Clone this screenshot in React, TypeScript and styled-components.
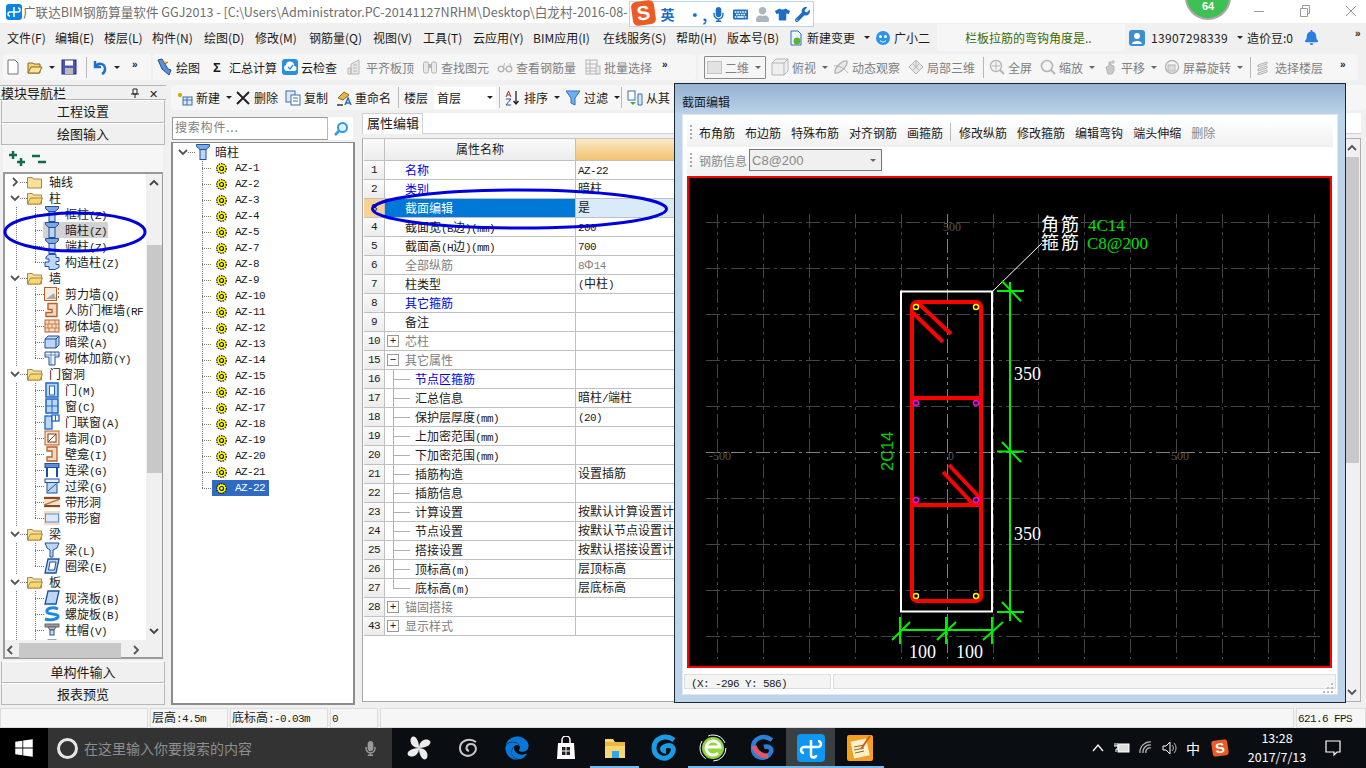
import React from "react";
import styled, { createGlobalStyle } from "styled-components";
import { FaMicrophone, FaKeyboard, FaTshirt, FaWrench, FaUser, FaWindows, FaEdge, FaBell } from "react-icons/fa";

const CJK = `"Noto Sans CJK SC", "Liberation Sans", sans-serif`;
const Global = createGlobalStyle`
  html, body { margin: 0; padding: 0; background: #f0f0f0; }
  body { font-family: ${CJK}; font-size: 12px; color: #1a1a1a; }
  * { box-sizing: border-box; }
`;

/* ---------- shell ---------- */
const Page = styled.div`position: relative; width: 1366px; height: 768px; overflow: hidden; display: flex; flex-direction: column; background: #f0f0f0;`;
const TitleBar = styled.div`flex: none; height: 23px; background: #fff; display: flex; align-items: center; padding-left: 6px; gap: 0; color: #6e6e6e; font-size: 12.6px; white-space: nowrap; overflow: hidden;`;
const AppLogo = styled.div`width: 16px; height: 16px; border-radius: 3px; background: #0a84e0; margin-right: 1px; flex: none; display: flex;`;
const WindowButtons = styled.div`position: absolute; top: 0; left: 1236px; display: flex; color: #888;`;
const WinBtn = styled.div`width: 46px; height: 22px; display: flex; align-items: center; justify-content: center;`;

const ImeBar = styled.div`position: absolute; left: 629px; top: 1px; width: 185px; height: 26px; background: #fff; border: 1px solid #bcd4e6; display: flex; align-items: center; color: #1c6fc4; z-index: 3;`;
const ImeLogo = styled.div`width: 24px; height: 24px; margin: -2px 6px 0 2px; background: #ee5a24; color: #fff; border-radius: 5px; transform: rotate(-8deg); font: 700 20px/24px "Liberation Sans", sans-serif; text-align: center;`;
const ImeWord = styled.span`font-weight: 700; font-size: 14px; width: 28px;`;
const ImeSlot = styled.div<{ $w: number }>`width: ${(p) => p.$w}px; display: flex; justify-content: center; align-items: center; font-size: 15px;`;

const ScoreBadge = styled.div`position: absolute; left: 1185px; top: -26px; width: 46px; height: 46px; border-radius: 50%; background: #3fc052; border: 2px solid #a9a9a9; color: #fff; font: 700 11px "Liberation Sans", sans-serif; display: flex; align-items: flex-end; justify-content: center; padding-bottom: 6px; z-index: 3;`;

/* ---------- menu ---------- */
const MenuBar = styled.div`flex: none; height: 29px; display: flex; align-items: center; padding-left: 7px; white-space: nowrap;`;
const MenuItem = styled.div<{ $w: number }>`flex: none; width: ${(p) => p.$w}px; display: flex; align-items: center; gap: 3px; font-size: 12px;`;
const TipPanel = styled.div`flex: none; width: 188px; height: 27px; margin: 0 4px; padding-left: 28px; background: #f6f6f6; border-radius: 3px; color: #3a6a00; line-height: 27px;`;
const Phone = styled.span`margin-left: 3px; letter-spacing: 0.35px;`;
const Chevrons = styled.div<{ $ml?: number }>`flex: none; margin-left: ${(p) => p.$ml ?? 0}px; font: 700 10px "Liberation Sans", sans-serif; letter-spacing: -1px; align-self: flex-start; padding-top: 5px; color: #222;`;
const Caret = styled.span<{ $dim?: boolean; $gap?: number }>`flex: none; width: 0; height: 0; border: 3px solid transparent; border-top: 3px solid ${(p) => (p.$dim ? "#666" : "#222")}; border-bottom: 0; margin-left: ${(p) => p.$gap ?? 3}px;`;

/* ---------- toolbars ---------- */
const MainBar = styled.div`flex: none; height: 30px; display: flex; align-items: center; padding-left: 3px; white-space: nowrap; overflow: hidden;`;
const BarGroup = styled.div<{ $w: number; $pad?: number }>`flex: none; width: ${(p) => p.$w}px; height: 26px; display: flex; align-items: center; background: #f6f6f6; border-radius: 3px; margin-right: 2px; padding-left: ${(p) => p.$pad ?? 0}px;`;
const Tool = styled.div<{ $w: number; $dim?: boolean }>`flex: none; width: ${(p) => p.$w}px; display: flex; align-items: center; gap: 3px; padding-left: 2px; font-size: 12px; color: ${(p) => (p.$dim ? "#808080" : "#1a1a1a")};`;
const Sep = styled.div`flex: none; width: 1px; height: 21px; background: #b8b8b8; margin: 0 3px;`;
const ViewBox = styled.div`flex: none; width: 62px; height: 23px; border: 1px solid #8a8a8a; border-radius: 1px; display: flex; align-items: center; padding-left: 2px; gap: 3px; color: #808080; margin-right: 3px;`;
const Square = styled.span`width: 15px; height: 13px; background: #e2e2e2; border: 1px solid #c4c4c4; flex: none;`;
const Ico = styled.svg<{ $s?: number }>`flex: none; width: ${(p) => p.$s ?? 16}px; height: ${(p) => p.$s ?? 16}px; display: block;`;
const Sigma = styled.span`flex: none; width: 18px; text-align: center; font: 700 13px "Liberation Sans", sans-serif;`;

/* ---------- work area ---------- */
const Work = styled.div`flex: none; height: 626px; display: flex; padding-top: 3px;`;
const Nav = styled.div`flex: none; width: 166px; display: flex; flex-direction: column; padding: 0 1px; `;
const NavHead = styled.div`height: 15px; margin: 0 -1px; display: flex; align-items: center; font-size: 13px; border-bottom: 1px solid #b5b5b5; border-top: 1px solid #b5b5b5; padding: 0 4px 0 1px;`;
const NavHeadText = styled.span`flex: 1;`;
const NavIconBtn = styled.span`width: 18px; display: flex; justify-content: center; color: #222; font-size: 11px;`;
const NavButton = styled.div<{ $h: number; $top?: number }>`flex: none; height: ${(p) => p.$h}px; margin-top: ${(p) => p.$top ?? 0}px; background: #f0f0f0; border: 1px solid #b8b8b8; border-top-color: #fff; display: flex; align-items: center; justify-content: center; font-size: 13px; padding-bottom: 2px; color: #1a1a1a;`;
const NavTools = styled.div`flex: none; height: 27px; margin: 0 2px; display: flex; align-items: center; padding-left: 5px; gap: 4px; background: #f6f6f6; color: #0e6c48;`;
const TreeBox = styled.div`flex: none; height: 487px; margin: 0 2px; border: 2px solid #9a9a9a; border-right-width: 1px; display: flex; flex-direction: column; background: #f0f0f0;`;
const TreeMain = styled.div`flex: none; height: 466px; display: flex; `;
const TreeRows = styled.div`flex: none; width: 141px; background: #fff; overflow: hidden; padding-top: 0; `;
const VScroll = styled.div`flex: none; width: 16px; display: flex; flex-direction: column; align-items: center; background: #f0f0f0;`;
const ScrollArrow = styled.div`flex: none; height: 18px; display: flex; align-items: center; justify-content: center;color:#555;`;
const VThumb = styled.div<{ $top: number; $h: number }>`flex: none; width: 15px; height: ${(p) => p.$h}px; margin-top: ${(p) => p.$top}px; background: #c8c8c8;`;
const Spacer = styled.div`flex: 1;`;
const HScroll = styled.div`flex: none; height: 16px; margin-top: 2px; display: flex; align-items: center;`;
const HThumb = styled.div`width: 102px; height: 15px; background: #c8c8c8; margin-left: 4px;`;
const HRight = styled.span`margin-left: 10px; display: flex;`;

const Row = styled.div`height: 16px; display: flex; align-items: center; font-size: 12px; white-space: nowrap;`;
const Latin = styled.span`font: 11px "Liberation Mono", monospace; letter-spacing: -0.6px;`;
const Twist = styled.span<{ $ml?: number }>`flex: none; width: 11px; margin-left: ${(p) => p.$ml ?? 4}px; display: flex; justify-content: center; color: #555;`;
const HDots = styled.span<{ $w: number }>`flex: none; width: ${(p) => p.$w}px; height: 1px; background: repeating-linear-gradient(90deg, #777 0 1px, transparent 1px 2px);`;
const RootGuide = styled.span<{ $w: number }>`flex: none; width: ${(p) => p.$w}px; align-self: stretch; margin-left: 11px; background: repeating-linear-gradient(0deg, #777 0 1px, transparent 1px 2px) left / 1px 100% no-repeat;`;
const Branch = styled.span<{ $w: number; $last?: boolean; $ml?: number }>`flex: none; width: ${(p) => p.$w}px; margin-left: ${(p) => p.$ml ?? 0}px; align-self: stretch; background:
  repeating-linear-gradient(90deg, #777 0 1px, transparent 1px 2px) center / 100% 1px no-repeat,
  repeating-linear-gradient(0deg, #777 0 1px, transparent 1px 2px) left top / 1px ${(p) => (p.$last ? "50%" : "100%")} no-repeat;`;
const TreeLabel = styled.span<{ $ml?: number }>`margin-left: ${(p) => p.$ml ?? 5}px; padding-bottom: 2px;`;
const RowMark = styled.span<{ $on: boolean }>`display: flex; align-items: center; height: 16px; background: ${(p) => (p.$on ? "#d2d2d2" : "none")}; margin-left: -2px; padding: 0 1px;`;

const Right = styled.div`flex: 1; min-width: 0; display: flex; flex-direction: column; padding-left: 5px;`;
const SubBar = styled.div`flex: none; height: 25px; display: flex; align-items: center; white-space: nowrap; background: #f6f6f6; padding-left: 4px; overflow: hidden; border-radius: 3px;`;
const FloorBox = styled.div`flex: none; width: 62px; height: 22px; background: #fff; margin: 0 0 0 3px; display: flex; align-items: center; justify-content: space-between; padding: 0 3px 0 3px;`;
const Body = styled.div`flex: 1; min-height: 0; display: flex;`;
const ListCol = styled.div`flex: none; width: 184px; display: flex; flex-direction: column;`;
const SearchRow = styled.div`flex: none; height: 32px; padding: 7px 0 0 1px; display: flex;`;
const SearchInput = styled.div`width: 156px; height: 23px; border: 1px solid #999; border-right-color: #bbb; background: #fff; color: #808080; padding-left: 2px; line-height: 18px; font-size: 12px; letter-spacing: 0.8px;`;
const SearchBtn = styled.div`width: 25px; height: 23px; background: #fff; display: flex; align-items: center; justify-content: center;`;
const ListBox = styled.div`flex: none; height: 563px; background: #fff; border: 2px solid #8c8c8c; border-top-width: 1px; padding: 1px 0 0 6px;`;
const GearBlock = styled.span<{ $sel?: boolean }>`display: flex; align-items: center; gap: 8px; height: 16px; width: 57px; padding-left: 4px; background: ${(p) => (p.$sel ? "#2f6bc4" : "none")}; color: ${(p) => (p.$sel ? "#fff" : "#1a1a1a")}; font: 11px "Liberation Mono", monospace; letter-spacing: -0.6px;`;

const PropCol = styled.div`flex: 1; min-width: 0; padding: 3px 5px 6px 7px; display: flex; flex-direction: column; overflow: hidden;`;
const TabStrip = styled.div`flex: none; height: 21px; border-bottom: 1px solid #d0d0d0; background: #fff; display: flex;`;
const Tab = styled.div`flex: none; width: 61px; height: 21px; border: 1px solid #d0d0d0; border-bottom: 0; background: #fff; padding-left: 4px; line-height: 17px; font-size: 13px;`;
const PropBody = styled.div`flex: 1; min-height: 0; display: flex; background: #fff; margin-top: 4px; padding-top: 0;`;
const PropTable = styled.div`flex: 1; min-width: 0; border-left: 1px solid #a8a8a8; border-bottom: 1px solid #a8a8a8; border-top: 1px solid #c4c4c4; padding-left: 1px;`;
const HeaderRow = styled.div`display: flex; height: 22px; border-bottom: 1px solid #c0c0c0; `;
const NumHead = styled.div`flex: none; width: 21px; background: linear-gradient(#fafafa, #ececec); border-right: 1px solid #c0c0c0;`;
const NameHead = styled.div`flex: none; width: 191px; background: linear-gradient(#fafafa, #ececec); border-right: 1px solid #c0c0c0; text-align: center; line-height: 19px; font-size: 12px;`;
const ValueHead = styled.div`flex: 1; background: linear-gradient(#fbe9c8, #f1c26e);`;
const PRow = styled.div`display: flex; height: 19px; border-bottom: 1px solid #c0c0c0; white-space: nowrap; `;
const Num = styled.div<{ $hot?: boolean }>`flex: none; width: 21px; border-right: 1px solid #c0c0c0; background: ${(p) => (p.$hot ? "#f9d193" : "linear-gradient(#fafafa, #ececec)")}; text-align: center; font: 11px/18px "Liberation Mono", monospace; letter-spacing: -0.6px;`;
const NameCell = styled.div<{ $tone: string; $hot?: boolean }>`flex: none; width: 191px; border-right: 1px solid #c0c0c0; display: flex; align-items: center; color: ${(p) => (p.$hot ? "#fff" : p.$tone)}; background: ${(p) => (p.$hot ? "#0078d7" : "none")}; overflow: hidden;`;
const ValueCell = styled.div<{ $hot?: boolean; $dim?: boolean }>`flex: none; width: 98px; overflow: hidden; padding-left: 2px; line-height: 16px; background: ${(p) => (p.$hot ? "#d9eaf8" : "none")}; color: ${(p) => (p.$dim ? "#808080" : "#1a1a1a")};`;
const Expander = styled.span`flex: none; width: 12px; height: 12px; margin: 0 6px 0 2px; border: 1px solid #999; display: flex; align-items: center; justify-content: center; color: #222; font: 11px/1 "Liberation Mono", monospace;`;
const RootText = styled.span<{ $plain?: boolean }>`margin-left: ${(p) => (p.$plain ? 20 : 0)}px; padding-bottom: 2px;`;
const SubLine = styled.span<{ $last?: boolean }>`flex: none; width: 17px; margin-left: 8px; margin-right: 5px; align-self: stretch; background:
  linear-gradient(#b0b0b0, #b0b0b0) left center / 100% 1px no-repeat,
  linear-gradient(#b0b0b0, #b0b0b0) left top / 1px ${(p) => (p.$last ? "50%" : "100%")} no-repeat;`;
const EdgeScroll = styled.div`flex: none; width: 17px; background: #f0f0f0; border: 1px solid #b0b0b0; border-width: 1px 1px 1px 0; display: flex; flex-direction: column; align-items: flex-start;`;
const EdgeArrow = styled.div`flex: none; width: 15px; height: 18px; display: flex; align-items: center; justify-content: center;`;
const EdgeThumb = styled.div`flex: none; width: 15px; height: 306px; background: #c8c8c8;`;

/* ---------- dialog ---------- */
const Dialog = styled.div`position: absolute; left: 674px; top: 83px; width: 672px; height: 620px; border: 1px solid #1b2733; background: #bcd3ea; display: flex; flex-direction: column; padding: 0 7px 7px; z-index: 2;`;
const DialogTitle = styled.div`flex: none; height: 30px; margin: 0 -7px; padding-left: 7px; background: linear-gradient(#95b2d1, #bad1e8); font-size: 12px; line-height: 36px;`;
const DialogBody = styled.div`flex: 1; min-height: 0; background: #fff; border: 1px solid #dfe8f1; display: flex; flex-direction: column; padding: 4px 4px 0;`;
const DlgBar = styled.div<{ $w?: number }>`flex: none; ${(p) => (p.$w ? `width: ${p.$w}px;` : "")} height: 28px; display: flex; align-items: center; gap: 10px; background: linear-gradient(#fff, #f0f0f0); padding: 0 0 2px 3px; white-space: nowrap;`;
const Grip = styled.span`flex: none; width: 2px; height: 15px; margin-right: -3px; background: repeating-linear-gradient(#aaa 0 2px, transparent 2px 4px);`;
const DlgSep = styled.span`flex: none; width: 1px; height: 18px; background: #bbb; margin: 0 -2px 0 -3px;`;
const DlgItem = styled.span<{ $dim?: boolean }>`color: ${(p) => (p.$dim ? "#888" : "#1a1a1a")};`;
const Combo = styled.div`flex: none; width: 133px; height: 22px; margin-left: -8px; border: 1px solid #777; background: #f0f0f0; color: #888; display: flex; align-items: center; justify-content: space-between; padding: 0 5px 0 2px; font: 13px "Liberation Sans", sans-serif;`;
const Canvas = styled.div`flex: none; width: 645px; height: 492px; border: 2px solid #f00; background: #000; margin-top: 1px;`;
const CadSvg = styled.svg`display: block; width: 641px; height: 488px;`;
const CoordBar = styled.div`flex: 1; min-height: 0; display: flex; padding: 6px 0 5px; gap: 2px; margin: 0 -3px;`;
const CoordCell = styled.div<{ $grow?: boolean }>`${(p) => (p.$grow ? "flex: 1;" : "width: 147px;")} border: 1px solid #ddd; background: #f4f4f4; padding-left: 6px; font: 11px/19px "Liberation Mono", monospace; letter-spacing: -0.6px; color: #222;`;
const Resize = styled.svg`display: block; margin: 8px 2px 0 auto; width: 10px; height: 10px;`;

/* ---------- status + taskbar ---------- */
const StatusBar = styled.div`flex: none; height: 20px; display: flex; gap: 2px; padding-left: 0;background: #f0f0f0;`;
const StatusCell = styled.div<{ $w?: number }>`${(p) => (p.$w ? `flex: none; width: ${p.$w}px;` : "flex: 1;")} border: 1px solid #dcdcdc; background: #f6f6f6; padding-left: 1px; line-height: 16px; white-space: nowrap;`;
const Taskbar = styled.div`flex: none; height: 40px; display: flex; background: #0a0e12; color: #fff;`;
const StartBtn = styled.div`flex: none; width: 48px; background: #000; display: flex; align-items: center; justify-content: center; font-size: 20px;`;
const SearchBar = styled.div`flex: none; width: 344px; background: #333; display: flex; align-items: center; padding-left: 9px; gap: 6px; color: #8e8e8e; font-size: 14px;`;
const Cortana = styled.span`flex: none; width: 21px; height: 21px; border: 3px solid #e6e6e6; border-radius: 50%;`;
const MicSlot = styled.span`margin-left: auto; margin-right: 14px; display: flex; color: #999; font-size: 15px;`;
const TaskSlots = styled.div`margin-left: 2px; display: flex;`;
const TaskSlot = styled.div<{ $run?: boolean; $active?: boolean }>`flex: none; width: 49px; height: 40px; display: flex; align-items: center; justify-content: center; background: ${(p) => (p.$active ? "#3a3f42" : "none")}; border-bottom: 2px solid ${(p) => (p.$run ? "#76b9ed" : "transparent")}; padding-top: 2px; box-shadow: ${(p) => (p.$run && !p.$active ? "inset 4px 0 0 #0a0e12, inset -4px 0 0 #0a0e12" : "none")};`;
const EdgeGlyph = styled.span`color: #0a78d7; font-size: 24px; display: flex;`;
const Tray = styled.div`margin-left: auto; display: flex; align-items: center; padding-right: 20px;`;
const TraySlot = styled.div<{ $w: number }>`flex: none; width: ${(p) => p.$w}px; display: flex; justify-content: center; align-items: center;`;
const TrayWord = styled.span`font-size: 14px;`;
const TrayS = styled.div`width: 16px; height: 16px; background: #ee5a24; border-radius: 3px; transform: rotate(-8deg); font: 700 14px/16px "Liberation Sans", sans-serif; text-align: center;`;
const Clock = styled.div`flex: none; width: 86px; text-align: center; font-size: 12.5px; line-height: 19px; padding-bottom: 3px;`;
const UserDim = styled.span`color: #aab6c2; display: flex;`;
const BellSlot = styled.span`display: flex; color: #2a7fe0; font-size: 15px;`;

/* ---------- overlay annotations ---------- */
const Annot = styled.svg`position: absolute; left: 0; top: 0; width: 1366px; height: 768px; pointer-events: none; z-index: 1;`;

/* ---------- helpers ---------- */
const Sim = ({ t }: { t: string }) => (
  <>
    {t.split(/([\x20-\x7e]+)/).filter(Boolean).map((s, i) =>
      /^[\x20-\x7e]+$/.test(s) ? <Latin key={i}>{s}</Latin> : <span key={i}>{s}</span>
    )}
  </>
);

const B = "#1f4fa0";
const L = "#bcd6f5";
const O = "#b5622a";
const P = "#f7d9c4";
const G = "#b5b5b5";
const GL = "#e8e8e8";

const Column = () => (
  <Ico viewBox="0 0 16 16"><path d="M1.500 .5h13v2l-3.500 3H5l-3.500-3z" fill="#7fa8e0" stroke={B} /><rect x="5" y="5.500" width="6" height="10" fill={L} stroke={B} /></Ico>
);
const Folder = ({ open }: { open?: boolean }) => (
  <Ico viewBox="0 0 16 16"><path d="M.5 3.5h5l1 1.5h8v9h-14z" fill="#f8e09a" stroke="#a58a4c" />{open && <path d="M.5 14l3-6h12l-2.5 6z" fill="#fbd76e" stroke="#a58a4c" />}</Ico>
);
const Gear = () => (
  <Ico $s={11} viewBox="0 0 11 11"><circle cx="5.5" cy="5.5" r="4.800" fill="#ff0" stroke="#111" strokeWidth="1.300" strokeDasharray="1.400 1" /><circle cx="5.5" cy="5.5" r="2" fill="#ff0" stroke="#111" strokeWidth="1.200" /></Ico>
);
const Chev = ({ d = "down", c = "#555" }: { d?: string; c?: string }) => {
  const p: Record<string, string> = { down: "M1 3l4 4 4-4", up: "M1 7l4-4 4 4", right: "M3 1l4 4-4 4", left: "M7 1L3 5l4 4" };
  return <Ico $s={10} viewBox="0 0 10 10"><path d={p[d]} fill="none" stroke={c} strokeWidth="1.8" /></Ico>;
};

const treeIcons: Record<string, React.ReactNode> = {
  column: <Column />,
  gz: <Ico viewBox="0 0 16 16"><path d="M5 .5h7v3h3v4h-3v3h3v3l-4 2H5v-3H1V8h4V5H2V3z" fill={L} stroke={B} /></Ico>,
  shear: <Ico viewBox="0 0 16 16"><rect x=".5" y="1.5" width="12" height="13" fill="#f5ebe2" stroke={O} /><path d="M2 13l8-6 2 6z" fill="#aaa" /><path d="M14.5 2v12" stroke={O} strokeDasharray="2 2" /></Ico>,
  doorwall: <Ico viewBox="0 0 16 16"><path d="M4 1.5h9v13H2v-4h6v-3H4z" fill={P} stroke={O} strokeWidth="1.4" /></Ico>,
  brick: <Ico viewBox="0 0 16 16"><rect x="1" y="2" width="14" height="12" fill={P} stroke={O} /><path d="M1 6h14M1 10h14M5 2v4M11 2v4M8 6v4M4 6v4M12 6v4M5 10v4M11 10v4" stroke={O} strokeWidth=".7" /></Ico>,
  beamb: <Ico viewBox="0 0 16 16"><path d="M1 5l3-3h11v9l-3 3H1z" fill={L} stroke={B} /><path d="M1 5h11v9M12 5l3-3" fill="none" stroke={B} /></Ico>,
  reinf: <Ico viewBox="0 0 16 16"><path d="M1 2h14v5H11v8H5V7H1z" fill="#eef5fd" stroke={B} /><path d="M7 2v13M11 2v5M1 5h14" stroke={B} strokeWidth=".6" /></Ico>,
  door: <Ico viewBox="0 0 16 16"><rect x="2" y="1" width="12" height="14" fill={L} stroke="#1d66c6" strokeWidth="1.5" /><rect x="5.5" y="4" width="5" height="9" fill="#fff" stroke="#1d66c6" /></Ico>,
  window: <Ico viewBox="0 0 16 16"><rect x="2" y="1" width="12" height="14" fill={L} stroke="#1d66c6" strokeWidth="1.5" /><path d="M8 1v14M2 8h12" stroke="#1d66c6" /></Ico>,
  doorwin: <Ico viewBox="0 0 16 16"><rect x="1" y="2" width="7" height="13" fill={L} stroke="#1d66c6" strokeWidth="1.3" /><rect x="8" y="1" width="7" height="6" fill="#fff" stroke="#1d66c6" strokeWidth="1.3" /><path d="M11.5 1v6" stroke="#1d66c6" /></Ico>,
  hole: <Ico viewBox="0 0 16 16"><rect x="1" y="1" width="14" height="14" fill={P} stroke={O} /><rect x="4" y="4" width="8" height="8" fill="#fff" stroke="#6a4a30" /><path d="M4 12l8-8" stroke="#6a4a30" /></Ico>,
  niche: <Ico viewBox="0 0 16 16"><path d="M3 1h10v14H3v-4h5V5H3z" fill={P} stroke={O} strokeWidth="1.3" /></Ico>,
  link: <Ico viewBox="0 0 16 16"><rect x="1" y="1.5" width="14" height="4" fill="#5f8fd4" stroke={B} /><path d="M3 5.5V15M13 5.5V15" stroke={B} strokeWidth="2" /></Ico>,
  lintel: <Ico viewBox="0 0 16 16"><rect x="1" y="1" width="14" height="3.5" fill="#eaf2fb" stroke={B} /><rect x="3" y="4.5" width="10" height="10.5" fill={L} stroke={B} /><path d="M4 13l8-7" stroke={B} /></Ico>,
  striph: <Ico viewBox="0 0 16 16"><rect x="0" y="2" width="16" height="12" fill="#f5e1d0" /><rect x="0" y="3" width="16" height="2" fill="#8a4a20" /><rect x="0" y="11" width="16" height="2" fill="#8a4a20" /><path d="M0 11l16-6" stroke="#b57a50" strokeWidth="1.5" /></Ico>,
  stripw: <Ico viewBox="0 0 16 16"><rect x="0" y="1" width="16" height="14" fill={P} /><rect x="1.5" y="4" width="13" height="8" fill="#dbe9fa" stroke="#5f8fd4" /></Ico>,
  beam: <Ico viewBox="0 0 16 16"><path d="M1 1h14l-2 5-4 2v7H6V8L3 6z" fill={L} stroke={B} /></Ico>,
  ring: <Ico viewBox="0 0 16 16"><path d="M4 1h11l-3 14H1z" fill={L} stroke={B} strokeWidth="1.3" /><path d="M6 4h6l-1.5 8H4.5z" fill="#fff" stroke={B} /></Ico>,
  slab: <Ico viewBox="0 0 16 16"><path d="M4 1h11l-3 13H1z" fill="#bcd6f5" stroke={B} strokeWidth="1.3" /></Ico>,
  spiral: <Ico viewBox="0 0 16 16"><path d="M14 3C8 0 2 3 3 6s10 1 11 4-7 5-13 3" fill="none" stroke="#1e8be0" strokeWidth="3" /></Ico>,
  cap: <Ico viewBox="0 0 16 16"><rect x="1" y="2" width="14" height="3" fill="#9a9a9a" stroke="#666" /><path d="M4 5h8l-2 3H6z" fill="#bbb" stroke="#666" /><rect x="6" y="8" width="4" height="5" fill="#dcdcdc" stroke={B} /></Ico>,
  dun: <Ico viewBox="0 0 16 16"><rect x="4" y="2" width="8" height="7" fill={L} stroke={B} /><rect x="1" y="9" width="14" height="6" fill="#dcdcdc" stroke="#666" /></Ico>,
};

type TreeNode = { label: string; kind?: string; folder?: boolean; closed?: boolean; last?: boolean; sel?: boolean };
const tree: TreeNode[] = [
  { label: "轴线", folder: true, closed: true },
  { label: "柱", folder: true },
  { label: "框柱(Z)", kind: "column" },
  { label: "暗柱(Z)", kind: "column", sel: true },
  { label: "端柱(Z)", kind: "column" },
  { label: "构造柱(Z)", kind: "gz", last: true },
  { label: "墙", folder: true },
  { label: "剪力墙(Q)", kind: "shear" },
  { label: "人防门框墙(RF", kind: "doorwall" },
  { label: "砌体墙(Q)", kind: "brick" },
  { label: "暗梁(A)", kind: "beamb" },
  { label: "砌体加筋(Y)", kind: "reinf", last: true },
  { label: "门窗洞", folder: true },
  { label: "门(M)", kind: "door" },
  { label: "窗(C)", kind: "window" },
  { label: "门联窗(A)", kind: "doorwin" },
  { label: "墙洞(D)", kind: "hole" },
  { label: "壁龛(I)", kind: "niche" },
  { label: "连梁(G)", kind: "link" },
  { label: "过梁(G)", kind: "lintel" },
  { label: "带形洞", kind: "striph" },
  { label: "带形窗", kind: "stripw", last: true },
  { label: "梁", folder: true },
  { label: "梁(L)", kind: "beam" },
  { label: "圈梁(E)", kind: "ring", last: true },
  { label: "板", folder: true },
  { label: "现浇板(B)", kind: "slab" },
  { label: "螺旋板(B)", kind: "spiral" },
  { label: "柱帽(V)", kind: "cap" },
  { label: "柱墩(W)", kind: "dun" },
];

const menus: [string, number][] = [
  ["文件(F)", 48], ["编辑(E)", 49], ["楼层(L)", 48], ["构件(N)", 52], ["绘图(D)", 51], ["修改(M)", 54], ["钢筋量(Q)", 64],
  ["视图(V)", 50], ["工具(T)", 50], ["云应用(Y)", 60], ["BIM应用(I)", 70], ["在线服务(S)", 73], ["帮助(H)", 51], ["版本号(B)", 61],
];

const barIcons: Record<string, React.ReactNode> = {
  draw: <Ico $s={18} viewBox="0 0 18 18"><path d="M3 2l4-1 6 10 3 1-2 5-7-6z" fill="#5f8fd4" stroke={B} /><path d="M8 3l2 3 3-2" fill="#e8c35a" stroke="#8a6a20" /></Ico>,
  cloud: <Ico viewBox="0 0 16 16"><rect x="0" y="0" width="16" height="16" rx="3" fill="#2a8fdc" /><path d="M3 11a3 3 0 0 1 1-5 4 4 0 0 1 8 1 2.5 2.5 0 0 1 0 5H4z" fill="#fff" /><path d="M6 8l2 2 3-4" fill="none" stroke="#2a8fdc" strokeWidth="1.4" /></Ico>,
  building: <Ico viewBox="0 0 16 16"><path d="M4 15V5l8-4v14zM1 15V9h3v6z" fill={GL} stroke={G} /><path d="M6 6h4M6 9h4M6 12h4" stroke={G} /></Ico>,
  bino: <Ico viewBox="0 0 16 16"><rect x="1.5" y="3" width="5" height="11" rx="1.5" fill={GL} stroke={G} /><rect x="9.5" y="3" width="5" height="11" rx="1.5" fill={GL} stroke={G} /><rect x="6.5" y="5" width="3" height="4" fill={G} /></Ico>,
  glass: <Ico viewBox="0 0 16 16"><circle cx="4" cy="10" r="2.8" fill="none" stroke={G} strokeWidth="1.4" /><circle cx="12" cy="10" r="2.8" fill="none" stroke={G} strokeWidth="1.4" /><path d="M7 10h2M6.5 9l1-5M14 9l-1-5" stroke={G} /></Ico>,
  batch: <Ico viewBox="0 0 16 16"><rect x="1" y="1" width="11" height="14" fill="#f5f5f5" stroke={G} /><path d="M1 5h11M1 9h11M1 12h11M5 1v14" stroke={G} /><rect x="11" y="7" width="4" height="8" fill={GL} stroke={G} /></Ico>,
  cube: <Ico $s={18} viewBox="0 0 18 18"><path d="M1 5l4-4h12v12l-4 4H1z" fill="#efefef" stroke={G} /><path d="M1 5h12v12M13 5l4-4" fill="none" stroke={G} /></Ico>,
  orbit: <Ico viewBox="0 0 16 16"><path d="M2 14C1 9 9 1 14 2c1 5-7 13-12 12z" fill={GL} stroke={G} strokeWidth="1.4" /><path d="M1 7c4-1 10 2 14 7" fill="none" stroke={G} /></Ico>,
  cubes: <Ico viewBox="0 0 16 16"><path d="M8 1l7 7-7 7-7-7z" fill={GL} stroke={G} /><path d="M4.5 4.5l7 7M8 1v7M11.5 4.5l-7 7" stroke={G} /></Ico>,
  zoomp: <Ico viewBox="0 0 16 16"><circle cx="7" cy="7" r="5.5" fill="#f5f5f5" stroke={G} strokeWidth="1.4" /><path d="M7 3v8M3 7h8" stroke={G} /><path d="M11 11l4 4" stroke={G} strokeWidth="2" /></Ico>,
  zoom: <Ico viewBox="0 0 16 16"><circle cx="7" cy="7" r="5.5" fill="#f5f5f5" stroke={G} strokeWidth="1.6" /><path d="M11 11l4 4" stroke={G} strokeWidth="2" /></Ico>,
  hand: <Ico viewBox="0 0 16 16"><path d="M4 8l3-1V3h2v3l3 1v5l-2 3H6z" fill="#c8c8c8" stroke={G} /><path d="M11 1v4M9 3h4" stroke={G} /></Ico>,
  rotate: <Ico viewBox="0 0 16 16"><circle cx="8" cy="8" r="6.5" fill="#f5f5f5" stroke={G} strokeWidth="1.4" /><rect x="4" y="6" width="7" height="6" fill="#ddd" stroke={G} /></Ico>,
  floors: <Ico viewBox="0 0 16 16"><path d="M2 6l9-3v2l-9 3zM2 10l9-3v2l-9 3zM2 14l9-3v2l-9 3z" fill={GL} stroke={G} /></Ico>,
};

const tb2: { icon?: string; sigma?: boolean; label: string; w: number; dim?: boolean }[] = [
  { icon: "draw", label: "绘图", w: 53 },
  { sigma: true, label: "汇总计算", w: 74 },
  { icon: "cloud", label: "云检查", w: 65 },
  { icon: "building", label: "平齐板顶", w: 75, dim: true },
  { icon: "bino", label: "查找图元", w: 75, dim: true },
  { icon: "glass", label: "查看钢筋量", w: 88, dim: true },
  { icon: "batch", label: "批量选择", w: 70, dim: true },
];
const tb3: { icon: string; label: string; w: number; caret?: boolean; sep?: boolean }[] = [
  { icon: "cube", label: "俯视", w: 62, caret: true },
  { icon: "orbit", label: "动态观察", w: 75 },
  { icon: "cubes", label: "局部三维", w: 74, sep: true },
  { icon: "zoomp", label: "全屏", w: 51 },
  { icon: "zoom", label: "缩放", w: 62, caret: true },
  { icon: "hand", label: "平移", w: 62, caret: true },
  { icon: "rotate", label: "屏幕旋转", w: 85, caret: true, sep: true },
  { icon: "floors", label: "选择楼层", w: 70 },
];

type PR = { n: number; name: string; val?: string; tone?: string; kind?: "plus" | "minus" | "sub" | "subLast"; dim?: boolean; hot?: boolean };
const BLUE = "#0000e6";
const GRAY = "#808080";
const INK = "#1a1a1a";
const props: PR[] = [
  { n: 1, name: "名称", val: "AZ-22", tone: BLUE },
  { n: 2, name: "类别", val: "暗柱", tone: BLUE },
  { n: 3, name: "截面编辑", val: "是", hot: true },
  { n: 4, name: "截面宽(B边)(mm)", val: "200" },
  { n: 5, name: "截面高(H边)(mm)", val: "700" },
  { n: 6, name: "全部纵筋", val: "8Φ14", tone: GRAY, dim: true },
  { n: 7, name: "柱类型", val: "(中柱)" },
  { n: 8, name: "其它箍筋", tone: BLUE },
  { n: 9, name: "备注" },
  { n: 10, name: "芯柱", kind: "plus", tone: GRAY },
  { n: 15, name: "其它属性", kind: "minus", tone: GRAY },
  { n: 16, name: "节点区箍筋", kind: "sub", tone: BLUE },
  { n: 17, name: "汇总信息", val: "暗柱/端柱", kind: "sub" },
  { n: 18, name: "保护层厚度(mm)", val: "(20)", kind: "sub" },
  { n: 19, name: "上加密范围(mm)", kind: "sub" },
  { n: 20, name: "下加密范围(mm)", kind: "sub" },
  { n: 21, name: "插筋构造", val: "设置插筋", kind: "sub" },
  { n: 22, name: "插筋信息", kind: "sub" },
  { n: 23, name: "计算设置", val: "按默认计算设置计", kind: "sub" },
  { n: 24, name: "节点设置", val: "按默认节点设置计", kind: "sub" },
  { n: 25, name: "搭接设置", val: "按默认搭接设置计", kind: "sub" },
  { n: 26, name: "顶标高(m)", val: "层顶标高", kind: "sub" },
  { n: 27, name: "底标高(m)", val: "层底标高", kind: "subLast" },
  { n: 28, name: "锚固搭接", kind: "plus", tone: GRAY },
  { n: 43, name: "显示样式", kind: "plus", tone: GRAY },
];
const azNames = ["1", "2", "3", "4", "5", "7", "8", "9", "10", "11", "12", "13", "14", "15", "16", "17", "18", "19", "20", "21", "22"];

const range = (a: number, b: number, s: number) => { const r: number[] = []; for (let v = a; v <= b; v += s) r.push(v); return r; };

const Cad = () => (
  <CadSvg viewBox="689 179 641 488">
    <g stroke="#444" strokeWidth="1" strokeDasharray="14 4 3 4">
      {range(223, 637, 46).map((y) => <line key={y} x1="706" x2="1322" y1={y + 0.5} y2={y + 0.5} />)}
      {[717, 763, 809, 855, 901, 993, 1038, 1084, 1130, 1176, 1222, 1268, 1314].map((x) => <line key={x} y1="215" y2="660" x1={x + 0.5} x2={x + 0.5} />)}
    </g>
    <g stroke="#808080" strokeWidth="1" strokeDasharray="14 4 3 4">
      <line x1="706" x2="1322" y1="453.5" y2="453.5" />
      <line y1="215" y2="660" x1="947.5" x2="947.5" />
    </g>
    <g fill="#555" fontFamily="Liberation Serif, serif" fontSize="12">
      <text x="943" y="232">500</text>
      <text x="709" y="461">-500</text>
      <text x="1171" y="461">500</text>
      <text x="948" y="461">0</text>
    </g>
    <rect x="901" y="292.5" width="91" height="320" fill="none" stroke="#fff" strokeWidth="2" />
    <g fill="none" stroke="#f00" strokeWidth="4">
      <rect x="912" y="303" width="69" height="299" rx="5" />
      <path d="M912 399h69M912 506h69" />
      <path d="M918 304l33 31M912 313l31 30M949 466l33 35M943 473l30 32" strokeLinecap="butt" />
    </g>
    <g fill="#000" strokeWidth="1.4">
      {[[916, 308], [976, 308], [916, 597], [976, 597]].map(([x, y]) => <circle key={`${x}${y}`} cx={x} cy={y} r="2.5" stroke="#ff0" />)}
      {[[916, 404], [976, 404], [916, 501], [976, 501]].map(([x, y]) => <circle key={`${x}${y}`} cx={x} cy={y} r="2.5" stroke="#f0f" />)}
    </g>
    <path d="M993 292L1042 244" stroke="#fff" strokeWidth="1" />
    <g stroke="#00f000" strokeWidth="2" fill="none">
      <path d="M1010 283v339M997 292h27M997 452.500h27M997 613h27" />
      <path d="M1002 282l19 20M1002 443l19 20M1002 603l19 20" />
      <path d="M900 631h92M900 618v27M946 618v27M992 618v27" />
      <path d="M892 641l18-18M937 641l19-18M983 641l20-18" />
    </g>
    <g fontFamily={`"Liberation Serif", "Noto Sans CJK SC", serif`} fontSize="18" fill="#fff">
      <text x="1041" y="232" letterSpacing="2">角筋</text>
      <text x="1041" y="250" letterSpacing="2">箍筋</text>
      <text x="1014" y="381">350</text>
      <text x="1014" y="541">350</text>
      <text x="909" y="659">100</text>
      <text x="956" y="659">100</text>
      <g fill="#00e000" fontSize="17">
        <text x="1088" y="232">4C14</text>
        <text x="1087" y="250">C8@200</text>
      </g>
    </g>
    <text transform="translate(893 472) rotate(-90)" fontFamily="Liberation Sans, sans-serif" fontSize="16.5" fill="#00d000">2C14</text>
  </CadSvg>
);

const task: { node: React.ReactNode; run?: boolean; active?: boolean }[] = [
  { node: <Ico $s={26} viewBox="0 0 26 26"><g fill="#ececec"><path d="M13 13C4 13 3 4 6 2s7 3 7 11z" /><path d="M13 13c0-9 9-10 11-7s-3 7-11 7z" /><path d="M13 13c9 0 10 9 7 11s-7-3-7-11z" /><path d="M13 13c0 9-9 10-11 7s3-7 11-7z" /></g></Ico> },
  { node: <Ico $s={22} viewBox="0 0 22 22"><path d="M19 5C12 0 3 4 3 11s8 10 13 6 3-10-2-10-6 6-2 7" fill="none" stroke="#c8c8c8" strokeWidth="2" /></Ico> },
  { node: <EdgeGlyph><FaEdge /></EdgeGlyph> },
  { node: <Ico $s={24} viewBox="0 0 24 24"><path d="M4 7h16l1 16H3z" fill="#fff" /><path d="M8 8V4a4 4 0 0 1 8 0v4" fill="none" stroke="#fff" strokeWidth="1.5" /><path d="M8 11h3.500v3.500H8zM12.500 11H16v3.500h-3.500zM8 15.500h3.500V19H8zM12.500 15.500H16V19h-3.500z" fill="#222" /></Ico> },
  { node: <Ico $s={24} viewBox="0 0 24 24"><path d="M2 3h8l2 3h10v16H2z" fill="#f7d774" /><path d="M2 6h20v4H2z" fill="#e8b93e" /><path d="M9 15h7v7H9z" fill="#34a4e8" /></Ico>, run: true },
  { node: <Ico $s={28} viewBox="0 0 28 28"><path d="M24 6C15 0 4 4 4 14s12 13 17 7 1-11-5-9-3 5 0 5" fill="none" stroke="#1a9be8" strokeWidth="5" /></Ico> },
  { node: <Ico $s={28} viewBox="0 0 28 28"><circle cx="14" cy="14" r="11" fill="#8ed63a" /><circle cx="14" cy="14" r="13" fill="none" stroke="#fff" strokeWidth="1" strokeDasharray="20 8" /><path d="M7 13h14a7 7 0 1 0-2 6" fill="none" stroke="#fff" strokeWidth="3" /></Ico>, run: true },
  { node: <Ico $s={28} viewBox="0 0 28 28"><path d="M24 6C15 0 5 4 5 14s11 12 16 7 1-10-5-8" fill="none" stroke="#2a7fd8" strokeWidth="4.500" /><path d="M6 12c2 6 6 10 14 10" fill="none" stroke="#e8556a" strokeWidth="5" /></Ico>, run: true },
  { node: <Ico $s={30} viewBox="0 0 30 30"><rect x="1" y="1" width="28" height="28" rx="4" fill="#0f96f0" /><path d="M15 7v15M8 14h14a3 3 0 0 0 0-6M8 14a3 3 0 0 0 0 6M15 22a2.500 2.500 0 0 0 5 0" fill="none" stroke="#fff" strokeWidth="2.500" /></Ico>, run: true, active: true },
  { node: <Ico $s={28} viewBox="0 0 28 28"><rect x="1" y="1" width="26" height="26" rx="2" fill="#f59f1e" /><rect x="6" y="6" width="16" height="17" fill="#faf1cc" transform="rotate(-12 14 14)" /><path d="M8 13l10-2M8 16l10-2M9 19l9-2" stroke="#8a6a20" /><path d="M24 2L15 15" stroke="#d85a1a" strokeWidth="2" /></Ico>, run: true },
];

export default function App() {
  return (
    <Page>
      <Global />
      <TitleBar>
        <AppLogo>
          <Ico viewBox="0 0 16 16"><path d="M8 3v10M4 8h8a2 2 0 0 0 0-4M4 8a2 2 0 0 0 0 4" fill="none" stroke="#fff" strokeWidth="1.5" /></Ico>
        </AppLogo>
        广联达BIM钢筋算量软件 GGJ2013 - [C:\Users\Administrator.PC-20141127NRHM\Desktop\白龙村-2016-08-
      </TitleBar>
      <ImeBar>
        <ImeLogo>S</ImeLogo>
        <ImeWord>英</ImeWord>
        <ImeSlot $w={22}><strong>•,</strong></ImeSlot>
        <ImeSlot $w={24}><FaMicrophone /></ImeSlot>
        <ImeSlot $w={22}><FaKeyboard /></ImeSlot>
        <ImeSlot $w={24}><UserDim><FaUser /></UserDim></ImeSlot>
        <ImeSlot $w={20}><FaTshirt /></ImeSlot>
        <ImeSlot $w={22}><FaWrench /></ImeSlot>
      </ImeBar>
      <ScoreBadge>64</ScoreBadge>
      <WindowButtons>
        <WinBtn><Ico viewBox="0 0 16 16"><path d="M3 8.500h10" stroke="#999" /></Ico></WinBtn>
        <WinBtn><Ico viewBox="0 0 16 16"><path d="M3.500 5.500h7v8h-7zM5.500 5V2.500h7v8H11" fill="none" stroke="#999" /></Ico></WinBtn>
        <WinBtn><Ico viewBox="0 0 16 16"><path d="M3 3l10 10M13 3L3 13" stroke="#999" /></Ico></WinBtn>
      </WindowButtons>

      <MenuBar>
        {menus.map(([t, w]) => <MenuItem key={t} $w={w}>{t}</MenuItem>)}
        <MenuItem $w={87}>
          <Ico viewBox="0 0 16 16"><path d="M3 1h7l3 3v11H3z" fill="#eef5fd" stroke="#2a6fc4" /><circle cx="9" cy="11" r="3.500" fill="#5cb531" /></Ico>
          新建变更<Caret $gap={6} />
        </MenuItem>
        <MenuItem $w={58}>
          <Ico viewBox="0 0 16 16"><circle cx="8" cy="8" r="7" fill="#2a95ea" /><circle cx="5.500" cy="6.500" r="1.500" fill="#fff" /><circle cx="10.500" cy="6.500" r="1.500" fill="#fff" /><path d="M5 10.500c2 2 4 2 6 0" fill="none" stroke="#fff" /></Ico>
          广小二
        </MenuItem>
        <TipPanel>栏板拉筋的弯钩角度是..</TipPanel>
        <MenuItem $w={118}>
          <Ico viewBox="0 0 16 16"><rect width="16" height="16" rx="3" fill="#3c8ed0" /><circle cx="8" cy="6" r="3" fill="#fff" /><path d="M3 14c0-4 10-4 10 0z" fill="#fff" /></Ico>
          <Phone>13907298339</Phone><Caret $gap={6} />
        </MenuItem>
        <MenuItem $w={57}>造价豆:0</MenuItem>
        <BellSlot><FaBell /></BellSlot>
        <Chevrons $ml={36}>»</Chevrons>
      </MenuBar>

      <MainBar>
        <BarGroup $w={148}>
          <Tool $w={22}><Ico viewBox="0 0 16 16"><path d="M3 1h7l3 3v11H3z" fill="#fff" stroke="#777" /></Ico></Tool>
          <Tool $w={34}><Ico viewBox="0 0 16 16"><path d="M1 14V4h5l1 1h6v9z" fill="#f2d27a" stroke="#8a6a20" /><path d="M1 14l3-6h11l-3 6z" fill="#fbe39a" stroke="#8a6a20" /></Ico><Caret /></Tool>
          <Tool $w={24}><Ico viewBox="0 0 16 16"><rect x="1" y="1" width="14" height="14" fill="#4a56b8" stroke="#242c78" /><rect x="4" y="1.500" width="8" height="5" fill="#fff" /><rect x="4" y="9" width="8" height="6" fill="#bbb" /></Ico></Tool>
          <Sep />
          <Tool $w={34}><Ico viewBox="0 0 16 16"><path d="M3 2v6h6M3 8c3-5 10-4 10 2 0 2-1 4-3 5" fill="none" stroke="#1f6fd0" strokeWidth="2.500" /></Ico><Caret /></Tool>
          <Chevrons $ml={8}>»</Chevrons>
        </BarGroup>
        <BarGroup $w={543}>
          {tb2.map((t) => (
            <Tool key={t.label} $w={t.w} $dim={t.dim}>
              {t.sigma ? <Sigma>Σ</Sigma> : barIcons[t.icon!]}
              {t.label}
            </Tool>
          ))}
          <Chevrons $ml={9}>»</Chevrons>
        </BarGroup>
        <BarGroup $w={660} $pad={6}>
          <ViewBox><Square />二维<Caret $dim /></ViewBox>
          {tb3.map((t) => (
            <React.Fragment key={t.label}>
              <Tool $w={t.w} $dim>{barIcons[t.icon]}{t.label}{t.caret && <Caret $dim />}</Tool>
              {t.sep && <Sep />}
            </React.Fragment>
          ))}
          <Chevrons $ml={16}>»</Chevrons>
        </BarGroup>
      </MainBar>

      <Work>
        <Nav>
          <NavHead>
            <NavHeadText>模块导航栏</NavHeadText>
            <NavIconBtn>
              <Ico $s={10} viewBox="0 0 10 10"><path d="M3 1h4v5H3zM1 6h8M5 6v4" fill="none" stroke="#222" /></Ico>
            </NavIconBtn>
            <NavIconBtn>✕</NavIconBtn>
          </NavHead>
          <NavButton $h={23}>工程设置</NavButton>
          <NavButton $h={22}>绘图输入</NavButton>
          <NavTools>
            <Ico $s={18} viewBox="0 0 18 18"><path d="M1 5h8M5 1v8M9 12h8M13 8v8" stroke="#0e6c48" strokeWidth="2.500" /></Ico>
            <Ico $s={18} viewBox="0 0 18 18"><path d="M2 6h8M8 12h8" stroke="#0e6c48" strokeWidth="2.500" /></Ico>
          </NavTools>
          <TreeBox>
            <TreeMain>
              <TreeRows>
                {tree.map((n, i) => n.folder ? (
                  <Row key={i}>
                    <Twist><Chev d={n.closed ? "right" : "down"} /></Twist>
                    <HDots $w={7} />
                    <Folder open={!n.closed} />
                    <TreeLabel $ml={6}><Sim t={n.label} /></TreeLabel>
                  </Row>
                ) : (
                  <Row key={i}>
                    <RootGuide $w={19} />
                    <Branch $w={10} $last={n.last} />
                    <RowMark $on={!!n.sel}>
                      {treeIcons[n.kind!]}
                      <TreeLabel><Sim t={n.label} /></TreeLabel>
                    </RowMark>
                  </Row>
                ))}
              </TreeRows>
              <VScroll>
                <ScrollArrow><Chev d="up" c="#444" /></ScrollArrow>
                <VThumb $top={53} $h={228} />
                <Spacer />
                <ScrollArrow><Chev d="down" c="#444" /></ScrollArrow>
              </VScroll>
            </TreeMain>
            <HScroll>
              <Chev d="left" c="#555" />
              <HThumb />
              <HRight><Chev d="right" c="#555" /></HRight>
            </HScroll>
          </TreeBox>
          <NavButton $h={22} $top={2}>单构件输入</NavButton>
          <NavButton $h={22}>报表预览</NavButton>
        </Nav>
        <Right>
          <SubBar>
            <Tool $w={58}>
              <Ico viewBox="0 0 16 16"><path d="M1 5h4M3 3v4" stroke="#d8a800" strokeWidth="2.500" /><rect x="6" y="7" width="9" height="8" fill="#dbe9fa" stroke="#3c6ea8" /><path d="M6 10h9M10 7v8" stroke="#3c6ea8" /></Ico>
              新建<Caret />
            </Tool>
            <Tool $w={50}><Ico viewBox="0 0 16 16"><path d="M2 2l12 12M14 2L2 14" stroke="#222" strokeWidth="2" /></Ico>删除</Tool>
            <Tool $w={51}><Ico viewBox="0 0 16 16"><rect x="1" y="1" width="9" height="11" fill="#dbe9fa" stroke="#3c6ea8" /><rect x="6" y="5" width="9" height="10" fill="#fff" stroke="#3c6ea8" /><path d="M8 8h5M8 11h5" stroke="#3c6ea8" /></Ico>复制</Tool>
            <Tool $w={61}><Ico viewBox="0 0 16 16"><path d="M2 8l6-6 5 3-6 5z" fill="#e8b93e" stroke="#8a6a20" /><path d="M9 15l3-7 3 7M10 13h4" fill="none" stroke="#2a6fc4" strokeWidth="1.500" /><path d="M1 15h6" stroke="#666" strokeWidth="2" /></Ico>重命名</Tool>
            <Sep />
            <Tool $w={29}>楼层</Tool>
            <FloorBox>首层<Caret /></FloorBox>
            <Sep />
            <Tool $w={60}><Ico viewBox="0 0 16 16"><path d="M1 7l2.500-6L6 7M2 5h3" fill="none" stroke="#b03030" /><path d="M1 9h5L1 15h5" fill="none" stroke="#2a4fa0" /><path d="M11 1v13M8.500 11l2.500 3 2.500-3" fill="none" stroke="#222" strokeWidth="1.300" /></Ico>排序<Caret /></Tool>
            <Tool $w={55}><Ico viewBox="0 0 16 16"><path d="M1 1h14L10 8v7l-4-2V8z" fill="#6fb0ea" stroke="#2a6fc4" /></Ico>过滤<Caret /></Tool>
            <Sep />
            <Tool $w={46}><Ico viewBox="0 0 16 16"><rect x="1" y="1" width="7" height="9" fill="#fff" stroke="#3c6ea8" /><path d="M3 12h6l-3 3z" fill="#3fae3f" /><path d="M11 4h4v11h-4z" fill="#dbe9fa" stroke="#3c6ea8" /></Ico>从其</Tool>
          </SubBar>
          <Body>
            <ListCol>
              <SearchRow>
                <SearchInput>搜索构件...</SearchInput>
                <SearchBtn>
                  <Ico viewBox="0 0 16 16"><circle cx="9.500" cy="6.500" r="4.500" fill="#e4f2fd" stroke="#2e9be8" strokeWidth="2" /><path d="M6 10l-4 4" stroke="#2e9be8" strokeWidth="2.500" /></Ico>
                </SearchBtn>
              </SearchRow>
              <ListBox>
                <Row>
                  <Twist $ml={-2}><Chev /></Twist>
                  <HDots $w={7} />
                  <Column />
                  <TreeLabel $ml={4}>暗柱</TreeLabel>
                </Row>
                {azNames.map((a, i) => (
                  <Row key={a}>
                    <Branch $w={10} $last={i === azNames.length - 1} $ml={23} />
                    <GearBlock $sel={i === azNames.length - 1}><Gear />AZ-{a}</GearBlock>
                  </Row>
                ))}
              </ListBox>
            </ListCol>
            <PropCol>
              <TabStrip><Tab>属性编辑</Tab></TabStrip>
              <PropBody>
                <PropTable>
                  <HeaderRow>
                    <NumHead />
                    <NameHead>属性名称</NameHead>
                    <ValueHead />
                  </HeaderRow>
                  {props.map((p) => (
                    <PRow key={p.n}>
                      <Num $hot={p.hot}>{p.n}</Num>
                      <NameCell $tone={p.tone ?? INK} $hot={p.hot}>
                        {(p.kind === "plus" || p.kind === "minus") && <Expander>{p.kind === "plus" ? "+" : "−"}</Expander>}
                        {(p.kind === "sub" || p.kind === "subLast") && <SubLine $last={p.kind === "subLast"} />}
                        <RootText $plain={!p.kind}><Sim t={p.name} /></RootText>
                      </NameCell>
                      <ValueCell $hot={p.hot} $dim={p.dim}><Sim t={p.val ?? ""} /></ValueCell>
                    </PRow>
                  ))}
                </PropTable>
                <EdgeScroll>
                  <EdgeArrow><Chev d="up" c="#555" /></EdgeArrow>
                  <EdgeThumb />
                  <Spacer />
                  <EdgeArrow><Chev d="down" c="#555" /></EdgeArrow>
                </EdgeScroll>
              </PropBody>
            </PropCol>
          </Body>
        </Right>
      </Work>

      <StatusBar>
        <StatusCell $w={148} />
        <StatusCell $w={78}><Sim t="层高:4.5m" /></StatusCell>
        <StatusCell $w={98}><Sim t="底标高:-0.03m" /></StatusCell>
        <StatusCell $w={48}><Sim t="0" /></StatusCell>
        <StatusCell />
        <StatusCell $w={70}><Sim t="621.6 FPS" /></StatusCell>
      </StatusBar>

      <Taskbar>
        <StartBtn><FaWindows /></StartBtn>
        <SearchBar>
          <Cortana />
          在这里输入你要搜索的内容
          <MicSlot><FaMicrophone /></MicSlot>
        </SearchBar>
        <TaskSlots>
          {task.map((t, i) => <TaskSlot key={i} $run={t.run} $active={t.active}>{t.node}</TaskSlot>)}
        </TaskSlots>
        <Tray>
          <TraySlot $w={24}><Ico $s={12} viewBox="0 0 12 12"><path d="M1 9l5-6 5 6" fill="none" stroke="#fff" strokeWidth="1.300" /></Ico></TraySlot>
          <TraySlot $w={24}><Ico viewBox="0 0 16 16"><rect x="4" y="4" width="11" height="8" fill="#ddd" stroke="#fff" /><path d="M1 3v3M3 3v3M0 6h4v3H2v3" stroke="#fff" fill="none" /></Ico></TraySlot>
          <TraySlot $w={24}><Ico viewBox="0 0 16 16"><path d="M2 13a10 10 0 0 1 11-11M5 13a7 7 0 0 1 8-8M8 13a4 4 0 0 1 5-5" fill="none" stroke="#bbb" strokeWidth="1.200" /></Ico></TraySlot>
          <TraySlot $w={22}><Ico viewBox="0 0 16 16"><path d="M2 6h3l4-4v12l-4-4H2z" fill="none" stroke="#fff" /><path d="M11 5a4 4 0 0 1 0 6M13 3a7 7 0 0 1 0 10" fill="none" stroke="#bbb" /></Ico></TraySlot>
          <TraySlot $w={26}><TrayWord>中</TrayWord></TraySlot>
          <TraySlot $w={28}><TrayS>S</TrayS></TraySlot>
          <Clock>13:28<br />2017/7/13</Clock>
          <TraySlot $w={26}><Ico $s={18} viewBox="0 0 18 18"><path d="M2 2h14v11h-3l-3 3v-3H2z" fill="none" stroke="#fff" strokeWidth="1.200" /></Ico></TraySlot>
        </Tray>
      </Taskbar>

      <Annot viewBox="0 0 1366 768">
        <ellipse cx="75" cy="232" rx="70" ry="19" fill="none" stroke="#0000dc" strokeWidth="3" />
        <ellipse cx="519.500" cy="209" rx="147" ry="19" fill="none" stroke="#0000dc" strokeWidth="3" />
      </Annot>

      <Dialog>
        <DialogTitle>截面编辑</DialogTitle>
        <DialogBody>
          <DlgBar>
            <Grip />
            <DlgItem>布角筋</DlgItem><DlgItem>布边筋</DlgItem><DlgItem>特殊布筋</DlgItem><DlgItem>对齐钢筋</DlgItem><DlgItem>画箍筋</DlgItem>
            <DlgSep />
            <DlgItem>修改纵筋</DlgItem><DlgItem>修改箍筋</DlgItem><DlgItem>编辑弯钩</DlgItem><DlgItem>端头伸缩</DlgItem><DlgItem $dim>删除</DlgItem>
          </DlgBar>
          <DlgBar $w={196}>
            <Grip />
            <DlgItem $dim>钢筋信息</DlgItem>
            <Combo>C8@200<Caret $dim /></Combo>
          </DlgBar>
          <Canvas><Cad /></Canvas>
          <CoordBar>
            <CoordCell>(X: -296 Y: 586)</CoordCell>
            <CoordCell $grow>
              <Resize viewBox="0 0 10 10"><path d="M8 0h2v2H8zM4 4h2v2H4zM8 4h2v2H8zM0 8h2v2H0zM4 8h2v2H4zM8 8h2v2H8z" fill="#bbb" /></Resize>
            </CoordCell>
          </CoordBar>
        </DialogBody>
      </Dialog>
    </Page>
  );
}
